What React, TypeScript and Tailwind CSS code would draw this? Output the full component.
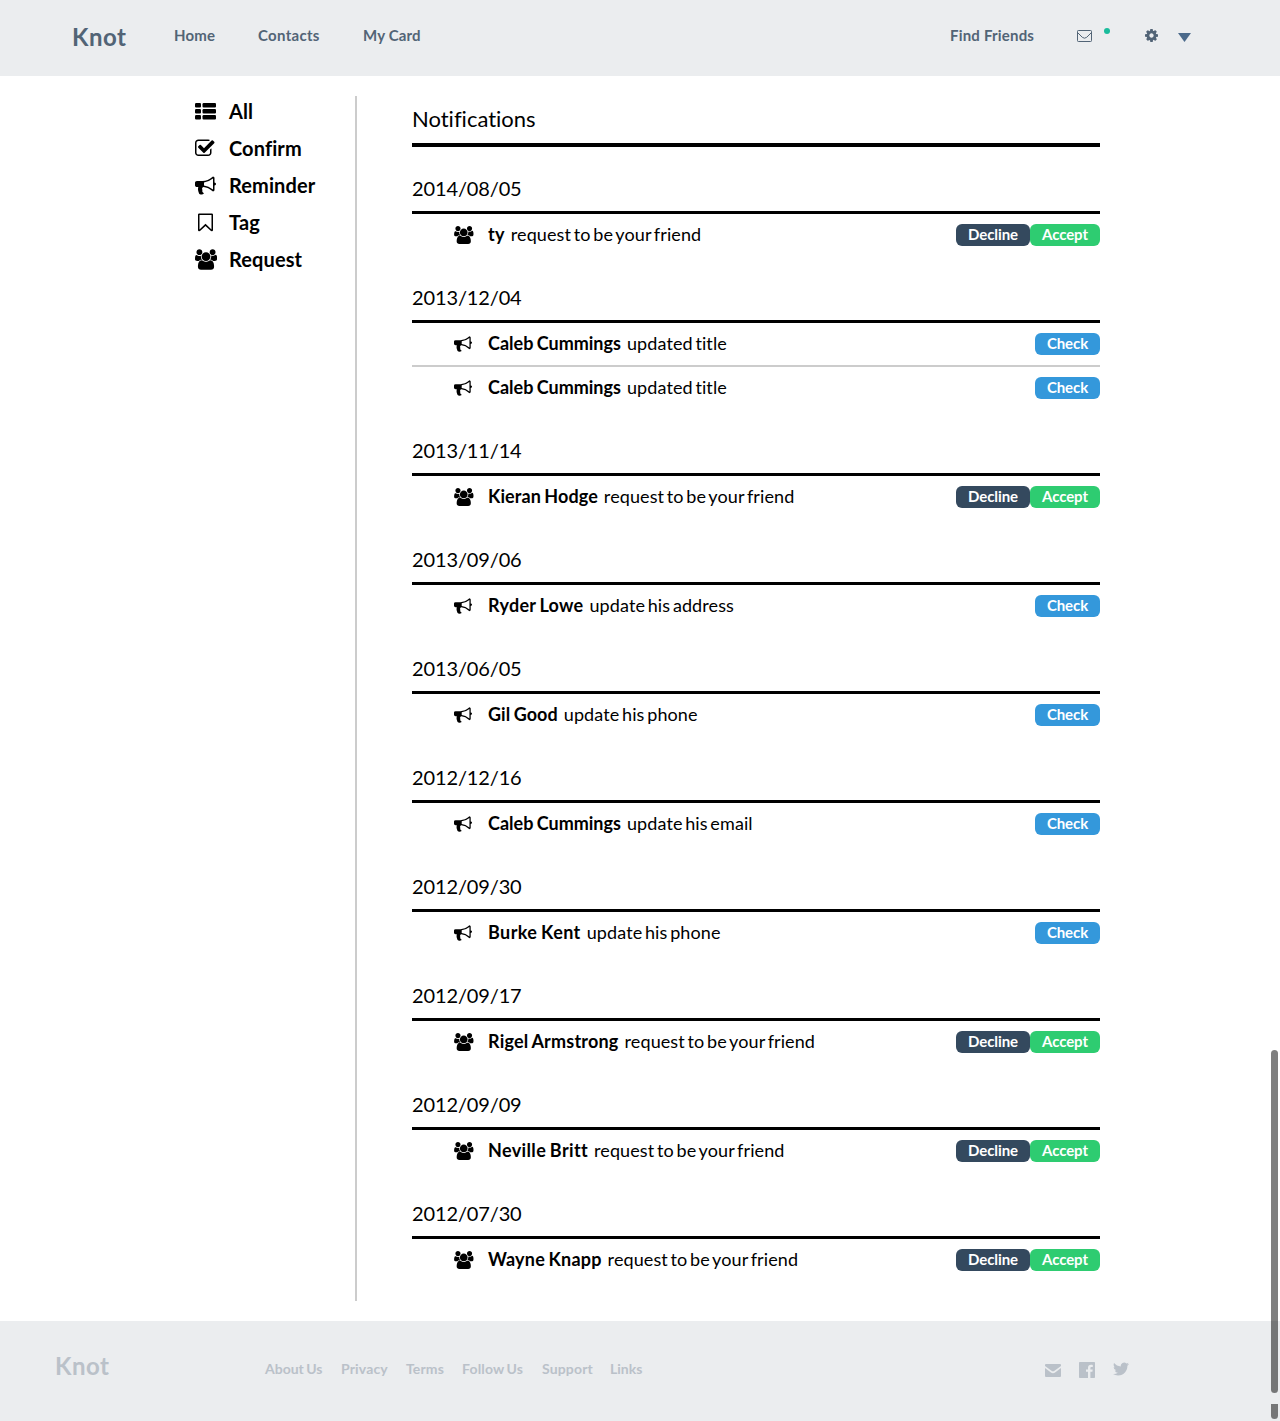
import React from "react";

type IconProps = { className?: string };

const GroupIcon = ({ className }: IconProps) => (
  <svg viewBox="0 0 1920 1792" fill="currentColor" className={className}>
    <path d="M593 896q-162 5-265 128h-134q-82 0-138-40.5t-56-118.5q0-353 124-353 6 0 43.5 21t97.5 42.5 119 21.5q67 0 133-23-5 37-5 66 0 159 93 293zm1071 637q0 120-73 189.5t-194 69.5h-874q-121 0-194-69.5t-73-189.5q0-53 3.5-103.5t14-109 26.5-108.5 43-97.5 62-81 85.5-53.5 111.5-20q10 0 43 21.5t73 48 107 48 135 21.5 135-21.5 107-48 73-48 43-21.5q61 0 111.5 20t85.5 53.5 62 81 43 97.5 26.5 108.5 14 109 3.5 103.5zm-1024-1277q0 106-75 181t-181 75-181-75-75-181 75-181 181-75 181 75 75 181zm704 384q0 159-112.5 271.5t-271.5 112.5-271.5-112.5-112.5-271.5 112.5-271.5 271.5-112.5 271.5 112.5 112.5 271.5zm576 225q0 78-56 118.5t-138 40.5h-134q-103-123-265-128 93-134 93-293 0-29-5-66 66 23 133 23 59 0 119-21.5t97.5-42.5 43.5-21q124 0 124 353zm-128-609q0 106-75 181t-181 75-181-75-75-181 75-181 181-75 181 75 75 181z" />
  </svg>
);

const BullhornIcon = ({ className }: IconProps) => (
  <svg viewBox="0 0 1792 1792" fill="currentColor" className={className}>
    <path d="M1664 640q53 0 90.500 37.500t37.500 90.500-37.500 90.500-90.500 37.500v384q0 52-38 90t-90 38q-417-347-812-380-58 19-91 66t-31 100.500 40 92.500q-20 33-23 65.500t6 58 33.500 55 48 50 61.500 50.500q-29 58-111.500 83t-168.500 11.500-132-55.500q-7-23-29.500-87.500t-32-94.500-23-89-15-101 3.500-98.500 22-110.500h-122q-66 0-113-47t-47-113v-192q0-66 47-113t113-47h480q435 0 896-384 52 0 90 38t38 90v384zm-128 604v-954q-394 302-768 343v270q377 42 768 341z" />
  </svg>
);

const ListIcon = ({ className }: IconProps) => (
  <svg viewBox="0 0 1792 1792" fill="currentColor" className={className}>
    <rect x="0" y="256" width="512" height="384" rx="96" />
    <rect x="640" y="256" width="1152" height="384" rx="96" />
    <rect x="0" y="768" width="512" height="384" rx="96" />
    <rect x="640" y="768" width="1152" height="384" rx="96" />
    <rect x="0" y="1280" width="512" height="384" rx="96" />
    <rect x="640" y="1280" width="1152" height="384" rx="96" />
  </svg>
);

const CheckSquareIcon = ({ className }: IconProps) => (
  <svg viewBox="64 0 1792 1792" fill="currentColor" className={className}>
    <path d="M1472 930v318q0 119-84.500 203.500t-203.500 84.500h-832q-119 0-203.500-84.500t-84.500-203.500v-832q0-119 84.500-203.500t203.500-84.500h832q63 0 117 25 15 7 18 23 3 17-9 29l-49 49q-10 10-23 10-3 0-9-2-23-6-45-6h-832q-66 0-113 47t-47 113v832q0 66 47 113t113 47h832q66 0 113-47t47-113v-254q0-13 9-22l64-64q10-10 23-10 6 0 12 3 20 8 20 29zm231-489l-814 814q-24 24-57 24t-57-24l-430-430q-24-24-24-57t24-57l110-110q24-24 57-24t57 24l263 263 647-647q24-24 57-24t57 24l110 110q24 24 24 57t-24 57z" />
  </svg>
);

const BookmarkIcon = ({ className }: IconProps) => (
  <svg viewBox="0 0 1792 1792" fill="currentColor" className={className}>
    <path d="M1408 256h-1024v1242l423-406 89-85 89 85 423 406v-1242zm12-128q23 0 44 9 33 13 52.500 41t19.500 62v1289q0 34-19.500 62t-52.500 41q-19 8-44 8-48 0-83-32l-441-424-441 424q-36 33-83 33-23 0-44-9-33-13-52.500-41t-19.500-62v-1289q0-34 19.500-62t52.500-41q21-9 44-9h1048z" />
  </svg>
);

const GearIcon = ({ className }: IconProps) => (
  <svg viewBox="128 128 1536 1536" fill="currentColor" className={className}>
    <path d="M1152 896q0-106-75-181t-181-75-181 75-75 181 75 181 181 75 181-75 75-181zm512-109v222q0 12-8 23t-20 13l-185 28q-19 54-39 91 35 50 107 138 10 12 10 25t-9 23q-27 37-99 108t-94 71q-12 0-26-9l-138-108q-44 23-91 38-16 136-29 186-7 28-36 28h-222q-14 0-24.500-8.500t-11.500-21.500l-28-184q-49-16-90-37l-141 107q-10 9-25 9-14 0-25-11-126-114-165-168-7-10-7-23 0-12 8-23 15-21 51-66.500t54-70.500q-27-50-41-99l-183-27q-13-2-21-12.500t-8-23.500v-222q0-12 8-23t19-13l186-28q14-46 39-92-40-57-107-138-10-12-10-24 0-10 9-23 26-36 98.500-107.500t94.500-71.500q13 0 26 10l138 107q44-23 91-38 16-136 29-186 7-28 36-28h222q14 0 24.500 8.500t11.500 21.500l28 184q49 16 90 37l142-107q9-9 24-9 13 0 25 10 129 119 165 170 7 8 7 22 0 12-8 23-15 21-51 66.500t-54 70.500q26 50 41 98l183 28q13 2 21 12.500t8 23.500z" />
  </svg>
);

const EnvelopeIcon = ({ className }: IconProps) => (
  <svg viewBox="0 0 15 12" fill="none" stroke="currentColor" className={className}>
    <rect x="0.500" y="0.500" width="14" height="11" rx="0.800" />
    <path d="M1 3l4.300 4.300q2.200 1.800 4.400 0L14 3" />
  </svg>
);

const MailSolidIcon = ({ className }: IconProps) => (
  <svg viewBox="0 0 16 13" fill="currentColor" className={className}>
    <path d="M1 0h14q1 0 1 1v.9L9.500 6.800Q8 7.900 6.500 6.800L0 1.900V1q0-1 1-1z" />
    <path d="M0 4l5.600 4.300Q8 10 10.400 8.300L16 4v8q0 1-1 1H1q-1 0-1-1z" />
  </svg>
);

const FacebookIcon = ({ className }: IconProps) => (
  <svg viewBox="0 0 16 16" fill="currentColor" className={className}>
    <path d="M.8 0h14.400q.8 0 .8.800v14.400q0 .8-.8.800H11.400V9.800h2l.3-2.300h-2.300V6.100c0-.7.300-1.100 1.100-1.100h1.300V2.900c-.4 0-1-.1-1.800-.1-1.900 0-3 1.100-3 3v1.700H7v2.300h2V16H.8Q0 16 0 15.200V.8Q0 0 .8 0z" />
  </svg>
);

const TwitterIcon = ({ className }: IconProps) => (
  <svg viewBox="0 1.500 24 21" fill="currentColor" className={className}>
    <path d="M23.950 4.570a10 10 0 01-2.820.775 4.960 4.960 0 002.160-2.720c-.951.555-2.005.959-3.130 1.180a4.920 4.920 0 00-8.380 4.480C7.690 8.090 4.070 6.130 1.640 3.160a4.820 4.820 0 00-.666 2.470c0 1.710.87 3.210 2.190 4.100a4.900 4.900 0 01-2.230-.616v.06a4.920 4.920 0 003.950 4.830 5 5 0 01-2.210.085 4.940 4.940 0 004.600 3.420A9.870 9.870 0 010 19.540a14 14 0 007.550 2.210c9.050 0 14-7.500 14-13.980 0-.21 0-.42-.015-.63a9.940 9.940 0 002.460-2.550z" />
  </svg>
);

const filters = [
  { label: "All", Icon: ListIcon, iconClass: "w-[21px] h-[21px]" },
  { label: "Confirm", Icon: CheckSquareIcon, iconClass: "mt-0.5 w-[21px] h-[21px]" },
  { label: "Reminder", Icon: BullhornIcon, iconClass: "mt-0.5 w-[21px] h-[21px]" },
  { label: "Tag", Icon: BookmarkIcon, iconClass: "mt-0.5 w-[21px] h-[21px]" },
  { label: "Request", Icon: GroupIcon, iconClass: "mt-0.5 w-[22px] h-[21px]" },
];

type Item = { name: string; text: string; request?: boolean; tracking: string };

const befriend = "request to be your friend";

const groups: { date: string; items: Item[] }[] = [
  { date: "2014/08/05", items: [{ name: "ty", text: befriend, request: true, tracking: "tracking-[0.3px]" }] },
  {
    date: "2013/12/04",
    items: [
      { name: "Caleb Cummings", text: "updated title", tracking: "tracking-normal" },
      { name: "Caleb Cummings", text: "updated title", tracking: "tracking-normal" },
    ],
  },
  { date: "2013/11/14", items: [{ name: "Kieran Hodge", text: befriend, request: true, tracking: "tracking-[0.08px]" }] },
  { date: "2013/09/06", items: [{ name: "Ryder Lowe", text: "update his address", tracking: "tracking-[0.25px]" }] },
  { date: "2013/06/05", items: [{ name: "Gil Good", text: "update his phone", tracking: "tracking-[0.06px]" }] },
  { date: "2012/12/16", items: [{ name: "Caleb Cummings", text: "update his email", tracking: "tracking-normal" }] },
  { date: "2012/09/30", items: [{ name: "Burke Kent", text: "update his phone", tracking: "tracking-[0.4px]" }] },
  { date: "2012/09/17", items: [{ name: "Rigel Armstrong", text: befriend, request: true, tracking: "tracking-[0.2px]" }] },
  { date: "2012/09/09", items: [{ name: "Neville Britt", text: befriend, request: true, tracking: "tracking-[0.36px]" }] },
  { date: "2012/07/30", items: [{ name: "Wayne Knapp", text: befriend, request: true, tracking: "tracking-[0.2px]" }] },
];

const buttonBase =
  "flex h-[22px] items-center justify-center rounded-md pb-0.5 text-[15px] leading-5 font-bold tracking-[-0.1px] text-white";

function Row({ item }: { item: Item }) {
  return (
    <li className="flex h-[42px] items-center border-[#cccccc] not-first:box-content not-first:border-t-2">
      <span className="ml-[42px] flex w-[34px] items-center">
        {item.request ? <GroupIcon className="h-[18px] w-[19.500px]" /> : <BullhornIcon className="h-[18px] w-[18px]" />}
      </span>
      <p className="flex gap-[6px] pb-0.5 text-[18px] leading-6 whitespace-nowrap">
        <strong className={`font-bold [word-spacing:-1px] ${item.tracking}`}>{item.name}</strong>
        <span className="tracking-[0.1px] [word-spacing:-2px]">{item.text}</span>
      </p>
      <div className="ml-auto flex">
        {item.request ? (
          <>
            <button className={`${buttonBase} w-[74px] bg-[#34495e]`}>Decline</button>
            <button className={`${buttonBase} w-[70px] bg-[#2ecc71]`}>Accept</button>
          </>
        ) : (
          <button className={`${buttonBase} w-[65px] bg-[#3498db]`}>Check</button>
        )}
      </div>
    </li>
  );
}

export default function App() {
  return (
    <div className="relative h-[1421px] w-[1280px] overflow-hidden bg-white font-['Lato',sans-serif] text-black [font-variant-ligatures:none]">
      <header className="flex h-[76px] items-start bg-[#ebedef] pl-[72px] text-[15px] leading-5 font-bold tracking-[0.2px] whitespace-nowrap text-[#526476]">
        <a className="mt-[21px] w-[102px] text-2xl leading-8 tracking-[0.5px]">Knot</a>
        <nav className="mt-[25px] flex">
          <a className="w-[84px]">Home</a>
          <a className="w-[105px] tracking-[0.3px]">Contacts</a>
          <a className="tracking-[0.15px]">My Card</a>
        </nav>
        <div className="mt-[25px] mr-[89px] ml-auto flex">
          <a className="w-[127px]">Find Friends</a>
          <EnvelopeIcon className="mt-[5px] h-3 w-[15px]" />
          <span className="mt-[3px] ml-3 h-1.5 w-1.5 rounded-full bg-[#1abc9c]" />
          <GearIcon className="mt-1 ml-[35px] h-[13px] w-[13px]" />
          <svg viewBox="0 0 13 9" className="mt-2 ml-5 h-[9px] w-[13px]">
            <path d="M0 0h13L6.500 9z" fill="#4b6a8b" />
          </svg>
        </div>
      </header>

      <main className="flex h-[1245px] py-5">
        <aside className="w-[357px] border-r-2 border-[#cccccc] pl-[195px]">
          <ul className="-mt-1">
            {filters.map(({ label, Icon, iconClass }) => (
              <li key={label} className="flex h-[37px] items-center text-xl font-bold tracking-[0.1px]">
                <span className="flex w-[34px]">
                  <Icon className={iconClass} />
                </span>
                {label}
              </li>
            ))}
          </ul>
        </aside>

        <section className="ml-[55px] w-[688px]">
          <h1 className="h-[51px] border-b-4 border-black text-[22px] leading-[46px]">Notifications</h1>
          {groups.map((group) => (
            <div key={group.date}>
              <h2 className="h-[67px] border-b-3 border-black pt-[29px] text-xl leading-6 tracking-[-0.13px]">
                {group.date}
              </h2>
              <ul>
                {group.items.map((item, i) => (
                  <Row key={i} item={item} />
                ))}
              </ul>
            </div>
          ))}
        </section>
      </main>

      <footer className="flex h-[100px] items-start bg-[#ebedef] pl-[55px] font-bold whitespace-nowrap text-[#bac1c9]">
        <span className="mt-[29px] w-[210px] text-2xl leading-8 tracking-[0.5px]">Knot</span>
        <nav className="mt-[38px] flex text-sm leading-5 tracking-[0.15px] [word-spacing:-1px]">
          <a className="w-[76px] tracking-normal">About Us</a>
          <a className="w-[65px]">Privacy</a>
          <a className="w-14">Terms</a>
          <a className="w-20">Follow Us</a>
          <a className="w-[68px]">Support</a>
          <a className="tracking-normal">Links</a>
        </nav>
        <div className="mt-[41px] mr-[151px] ml-auto flex">
          <MailSolidIcon className="mt-0.5 h-[13px] w-4" />
          <FacebookIcon className="ml-[18px] h-4 w-4" />
          <TwitterIcon className="ml-[18px] h-[14px] w-4" />
        </div>
      </footer>

      <div className="absolute top-[1050px] left-[1271px] h-[343px] w-[7px] rounded-full bg-black/50" />
      <div className="absolute top-[1404px] left-[1271px] h-[15px] w-[7px] rounded-b-full bg-black/50" />
    </div>
  );
}
